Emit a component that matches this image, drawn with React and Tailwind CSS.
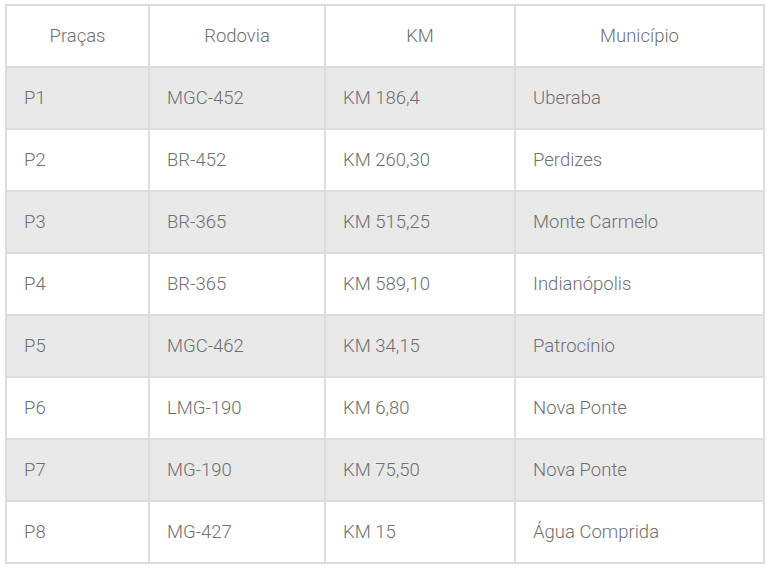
import React from "react";

const rows = [
  ["P1", "MGC-452", "KM 186,4", "Uberaba"],
  ["P2", "BR-452", "KM 260,30", "Perdizes"],
  ["P3", "BR-365", "KM 515,25", "Monte Carmelo"],
  ["P4", "BR-365", "KM 589,10", "Indianópolis"],
  ["P5", "MGC-462", "KM 34,15", "Patrocínio"],
  ["P6", "LMG-190", "KM 6,80", "Nova Ponte"],
  ["P7", "MG-190", "KM 75,50", "Nova Ponte"],
  ["P8", "MG-427", "KM 15", "Água Comprida"],
];

const headers = ["Praças", "Rodovia", "KM", "Município"];
const widths = ["w-[143px]", "w-[176px]", "w-[190px]", "w-[249px]"];

export default function App() {
  return (
    <div className="w-[768px] h-[569px] bg-white pt-[4px] pl-[5px] font-['Roboto',sans-serif] text-[#6f6f6f]">
      <table className="border-collapse table-fixed w-[758px] text-[18.5px] font-light">
        <colgroup>
          {widths.map((w, i) => (
            <col key={i} className={w} />
          ))}
        </colgroup>
        <thead>
          <tr className="h-[62px]">
            {headers.map((h) => (
              <th
                key={h}
                className="border-2 border-[#dcdcdc] font-light text-center align-middle pt-[2px]"
              >
                {h}
              </th>
            ))}
          </tr>
        </thead>
        <tbody>
          {rows.map((r, i) => (
            <tr key={i} className={`h-[62px] ${i % 2 === 0 ? "bg-[#e9e9e9]" : "bg-white"}`}>
              {r.map((c, j) => (
                <td key={j} className="border-2 border-[#dcdcdc] px-[17px] pt-[1px] align-middle text-left">
                  {c}
                </td>
              ))}
            </tr>
          ))}
        </tbody>
      </table>
    </div>
  );
}
